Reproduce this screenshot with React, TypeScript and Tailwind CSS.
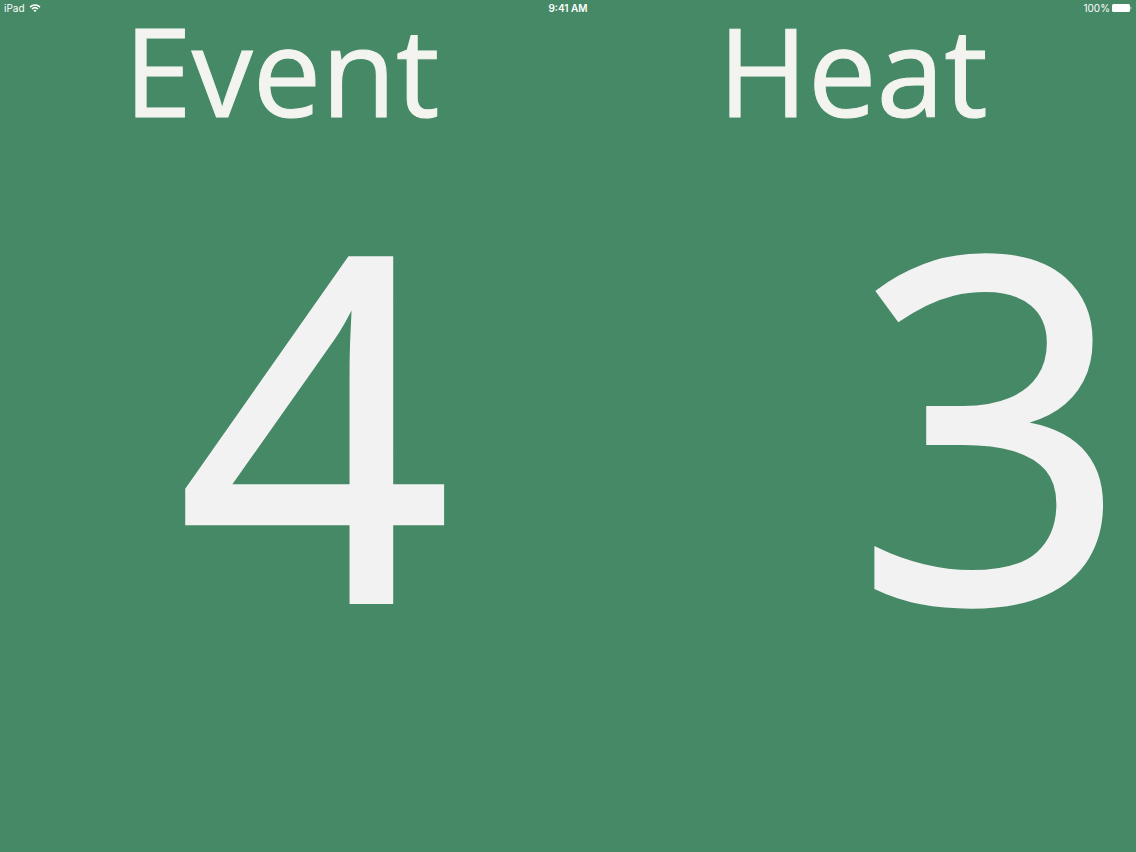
interface PanelProps {
  label: string;
  value: number;
  className: string;
  valueClassName: string;
}

export default function App() {
  return (
    <div className="min-h-screen overflow-hidden bg-[#468966] font-['Open_Sans',sans-serif] text-[#f2f2f2]">
      {/* STATUS BAR */}
      <header className="grid h-4 grid-cols-3 items-center px-1 font-[Inter,sans-serif] text-[10px] leading-4 text-white">
        <div className="flex items-center gap-1">
          <span>iPad</span>
          <WifiIcon />
        </div>
        <time className="text-center font-semibold">9:41 AM</time>
        <div className="flex items-center justify-end gap-0.5">
          <span>100%</span>
          <BatteryIcon />
        </div>
      </header>

      {/* SCOREBOARD */}
      <main className="grid grid-cols-2">
        <Panel label="Event" value={4} className="pl-[124px]" valueClassName="pl-[54px]" />
        <Panel label="Heat" value={3} className="pl-[150px]" valueClassName="pl-[138px]" />
      </main>
    </div>
  );
}

function Panel({ label, value, className, valueClassName }: PanelProps) {
  return (
    <section className={`min-w-0 ${className}`}>
      <h1 className="text-[122px] leading-[108px] text-[#f3f4ef] [-webkit-text-stroke:1px]">{label}</h1>
      <p className={`pt-8 text-[476px] leading-[520px] [-webkit-text-stroke:6px] ${valueClassName}`}>{value}</p>
    </section>
  );
}

function WifiIcon() {
  return (
    <svg className="h-2 w-3" viewBox="0 0 12 8" fill="none" stroke="currentColor" strokeWidth="1.5" aria-hidden="true">
      <path d="M1 3.1C3.8.4 8.2.4 11 3.1" />
      <path d="M2.9 5C4.7 3.4 7.3 3.4 9.1 5" />
      <path d="M6 8 4.4 6.4C5.3 5.6 6.7 5.6 7.6 6.4Z" fill="currentColor" stroke="none" />
    </svg>
  );
}

function BatteryIcon() {
  return (
    <svg className="h-2 w-5" viewBox="0 0 20 8" fill="currentColor" aria-hidden="true">
      <rect width="18" height="8" rx="1.5" />
      <path d="M18.6 2.7c1.2.3 1.2 2.3 0 2.6Z" />
    </svg>
  );
}
